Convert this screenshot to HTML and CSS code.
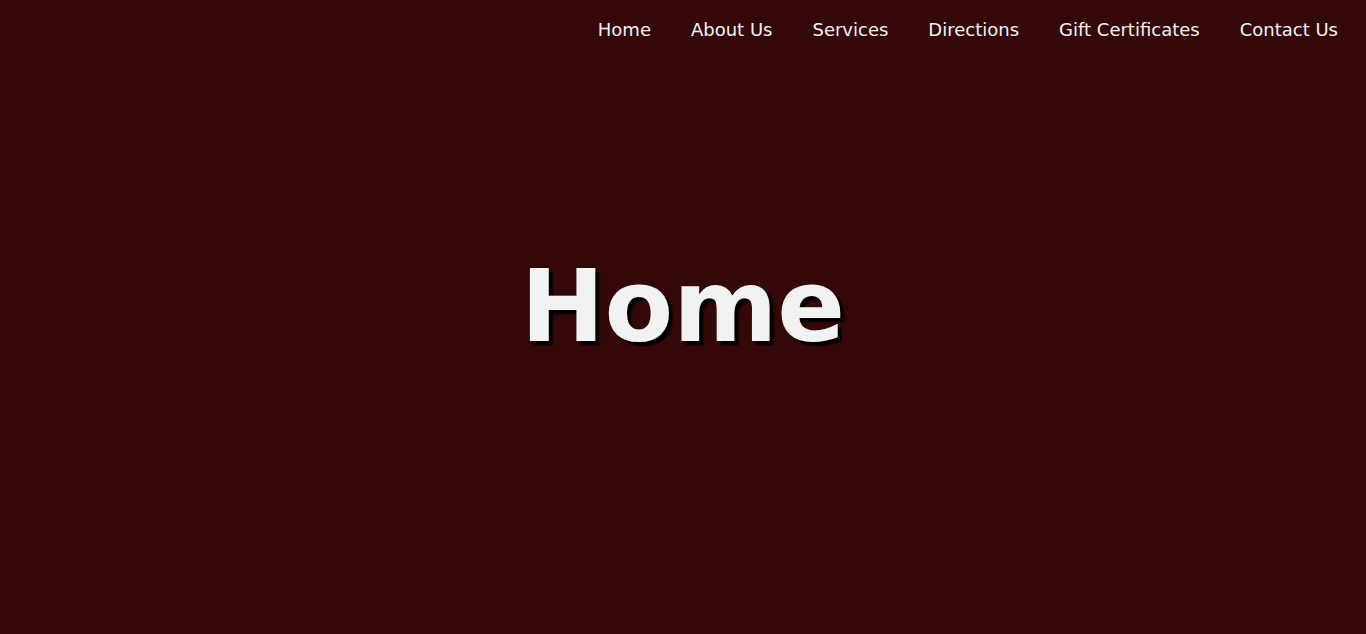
FILE: index.html
```html
<!DOCTYPE html>
<html lang="en">
<head>
<meta charset="utf-8">
<title>Home</title>
<link rel="stylesheet" href="styles.css">
</head>
<body>
<header class="site-header">
  <nav class="main-nav">
    <a href="#" class="nav-link">Home</a>
    <a href="#" class="nav-link">About Us</a>
    <a href="#" class="nav-link">Services</a>
    <a href="#" class="nav-link">Directions</a>
    <a href="#" class="nav-link">Gift Certificates</a>
    <a href="#" class="nav-link">Contact Us</a>
  </nav>
</header>
<main class="hero">
  <h1 class="hero-title">Home</h1>
</main>
</body>
</html>
```
FILE: styles.css
```css
html, body {
  margin: 0;
  padding: 0;
}
body {
  background: #340808;
  min-height: 100vh;
  font-family: "DejaVu Sans", sans-serif;
  color: #f2f2f2;
}
.site-header {
  display: flex;
  justify-content: flex-end;
  padding: 19px 28px 20px;
}
.main-nav {
  display: flex;
  gap: 40px;
}
.nav-link {
  color: #f2f2f2;
  text-decoration: none;
  font-size: 18px;
  line-height: 21px;
}
.hero {
  display: flex;
  justify-content: center;
  padding-top: 188px;
}
.hero-title {
  margin: 0;
  font-size: 100px;
  font-weight: bold;
  color: #f2f2f2;
  text-shadow: 4px 4px 2px #000;
}
```
